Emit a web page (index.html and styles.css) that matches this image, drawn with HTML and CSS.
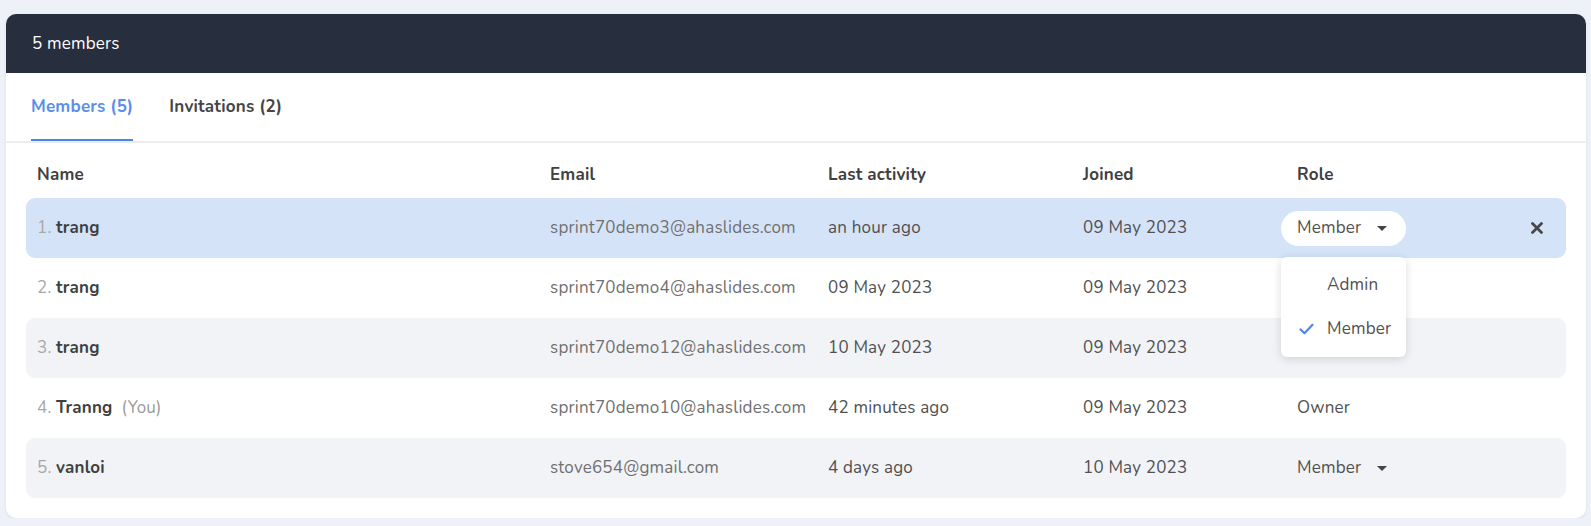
FILE: index.html
```html
<!DOCTYPE html>
<html lang="en">
<head>
<meta charset="utf-8">
<title>Members</title>
<link rel="stylesheet" href="styles.css">
</head>
<body>
<div class="card">
  <div class="card-header">5 members</div>
  <div class="tabs">
    <div class="tab active">Members (5)</div>
    <div class="tab">Invitations (2)</div>
  </div>
  <div class="table">
    <div class="row head">
      <div>Name</div>
      <div>Email</div>
      <div>Last activity</div>
      <div>Joined</div>
      <div class="role-cell">Role</div>
      <div></div>
    </div>
    <div class="row selected">
      <div class="name"><span class="num">1.</span> <b>trang</b></div>
      <div class="email">sprint70demo3@ahaslides.com</div>
      <div>an hour ago</div>
      <div>09 May 2023</div>
      <div class="role-wrap">
        <div class="role-select pill">Member <span class="caret"></span></div>
        <div class="menu">
          <div class="menu-item">Admin</div>
          <div class="menu-item checked">
            <svg class="check" width="15" height="12" viewBox="0 0 15 12"><path d="M1.5 6.5 L5.5 10.2 L13.5 1.8" fill="none" stroke="#4a86e8" stroke-width="2.2" stroke-linecap="round" stroke-linejoin="round"/></svg>
            Member
          </div>
        </div>
      </div>
      <div class="close">
        <svg width="12" height="12" viewBox="0 0 12 12"><path d="M1.5 1.5 L10.5 10.5 M10.5 1.5 L1.5 10.5" stroke="#474747" stroke-width="2.8" stroke-linecap="round"/></svg>
      </div>
    </div>
    <div class="row">
      <div class="name"><span class="num">2.</span> <b>trang</b></div>
      <div class="email">sprint70demo4@ahaslides.com</div>
      <div>09 May 2023</div>
      <div>09 May 2023</div>
      <div class="role-cell"></div>
      <div></div>
    </div>
    <div class="row alt">
      <div class="name"><span class="num">3.</span> <b>trang</b></div>
      <div class="email">sprint70demo12@ahaslides.com</div>
      <div>10 May 2023</div>
      <div>09 May 2023</div>
      <div class="role-cell"></div>
      <div></div>
    </div>
    <div class="row">
      <div class="name"><span class="num">4.</span> <b>Tranng</b><span class="you">(You)</span></div>
      <div class="email">sprint70demo10@ahaslides.com</div>
      <div>42 minutes ago</div>
      <div>09 May 2023</div>
      <div class="role-cell">Owner</div>
      <div></div>
    </div>
    <div class="row alt">
      <div class="name"><span class="num">5.</span> <b>vanloi</b></div>
      <div class="email">stove654@gmail.com</div>
      <div>4 days ago</div>
      <div>10 May 2023</div>
      <div class="role-wrap">
        <div class="role-select">Member <span class="caret"></span></div>
      </div>
      <div></div>
    </div>
  </div>
</div>
</body>
</html>
```
FILE: styles.css
```css
* { box-sizing: border-box; }
html, body { margin: 0; padding: 0; }
body {
  background: #eef2f8;
  font-family: "Nunito", "Lato", "Liberation Sans", sans-serif;
  font-size: 17px;
  letter-spacing: 0.2px;
  color: #505050;
  padding: 14px 5px 0 6px;
}
.card {
  background: #fff;
  border-radius: 10px;
  box-shadow: 0 1px 3px rgba(30, 40, 70, 0.10);
  padding-bottom: 20px;
}
.card-header {
  background: #272e3d;
  color: #fff;
  height: 59px;
  line-height: 60px;
  padding-left: 26px;
  border-radius: 10px 10px 0 0;
}
.tabs {
  display: flex;
  gap: 36px;
  padding: 0 25px;
  border-bottom: 2px solid #ececec;
}
.tab {
  padding: 23px 0 21px;
  line-height: 22px;
  font-weight: 700;
  color: #454545;
  border-bottom: 2px solid transparent;
}
.tab.active {
  color: #5a8fe9;
  border-bottom-color: #4a86e8;
}
.table {
  padding: 0 20px;
}
.row {
  display: grid;
  grid-template-columns: 513px 278px 255px 198px 1fr 40px;
  align-items: center;
  height: 60px;
  padding: 0 12px 0 11px;
  border-radius: 9px;
  line-height: 22px;
  white-space: nowrap;
}
.row.head {
  height: auto;
  padding-top: 21px;
  padding-bottom: 12px;
  font-weight: 700;
  color: #404040;
}
.row.selected { background: #d5e3f9; }
.row.alt { background: #f1f3f7; }
.num { color: #a8a8a8; }
.name b { color: #404040; font-weight: 700; }
.you { color: #9a9a9a; margin-left: 9px; }
.email { color: #707070; }
.role-cell { padding-left: 16px; }
.role-wrap { position: relative; }
.role-select {
  display: inline-flex;
  align-items: center;
  height: 35px;
  padding: 0 19px 0 16px;
  border-radius: 18px;
}
.role-select.pill { background: #fff; }
.caret {
  display: inline-block;
  width: 0;
  height: 0;
  margin-left: 16px;
  border-left: 5px solid transparent;
  border-right: 5px solid transparent;
  border-top: 5px solid #444;
}
.menu {
  position: absolute;
  top: 46px;
  left: 0;
  width: 125px;
  background: #fff;
  border-radius: 6px;
  box-shadow: 0 2px 10px rgba(0, 0, 0, 0.14);
  padding: 6px 0;
  z-index: 2;
}
.menu-item {
  position: relative;
  height: 44px;
  line-height: 44px;
  padding-left: 46px;
}
.check {
  position: absolute;
  left: 18px;
  top: 16px;
}
.close {
  display: flex;
  justify-content: flex-end;
  padding-right: 11px;
}
.close svg { display: block; }
```
